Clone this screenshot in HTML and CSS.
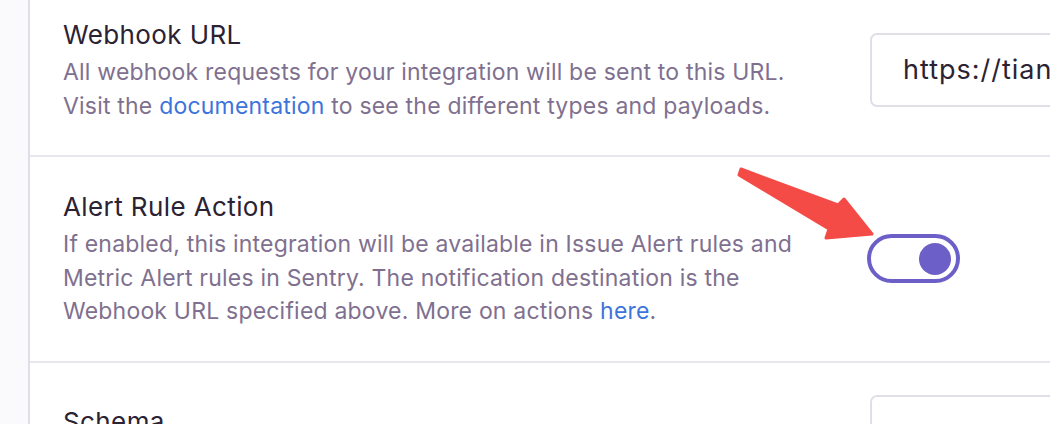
FILE: index.html
```html
<!DOCTYPE html>
<html>
<head>
<meta charset="utf-8">
<link rel="stylesheet" href="styles.css">
</head>
<body>
<div class="page">
  <aside class="sidebar"></aside>
  <main class="panel">
    <div class="row row-first">
      <div class="label">
        <div class="title">Webhook URL</div>
        <div class="help">All webhook requests for your integration will be sent to this URL.<br>Visit the <a href="#">documentation</a> to see the different types and payloads.</div>
      </div>
      <div class="control">
        <div class="input">https://tianshu.example.com/api/sentry/webhook</div>
      </div>
    </div>
    <div class="row">
      <div class="label">
        <div class="title">Alert Rule Action</div>
        <div class="help">If enabled, this integration will be available in Issue Alert rules and Metric Alert rules in Sentry. The notification destination is the Webhook URL specified above. More on actions <a href="#">here</a>.</div>
      </div>
      <div class="control">
        <div class="toggle"><span class="knob"></span></div>
      </div>
    </div>
    <div class="row row-top">
      <div class="label label-schema">
        <div class="title">Schema</div>
        <div class="help">Schema for your UI components. Click here for documentation.</div>
      </div>
      <div class="control">
        <div class="input input-tall"></div>
      </div>
    </div>
  </main>
  <svg class="arrow" width="1050" height="424" viewBox="0 0 1050 424">
    <polygon points="741,169 838,205 844,199 872,234 826,238 829,229 739,175" fill="#f44b47" stroke="#f44b47" stroke-width="3" stroke-linejoin="round"/>
  </svg>
</div>
</body>
</html>
```

FILE: styles.css
```css
html, body {
  margin: 0;
  padding: 0;
  background: #ffffff;
  overflow: hidden;
}

.page {
  position: relative;
  display: flex;
  width: 1050px;
  height: 424px;
  overflow: hidden;
  font-family: Inter, "Noto Sans", sans-serif;
}

.sidebar {
  flex: 0 0 28px;
  background: #faf9fb;
  border-right: 2px solid #e2dee7;
}

.panel {
  flex: 0 0 1300px;
  margin-top: -15px;
}

.row {
  display: flex;
  align-items: center;
  padding: 32px 0 32px 33px;
  border-bottom: 2px solid #e9e6ee;
}

.row-top {
  align-items: flex-start;
  border-bottom: none;
}

.label {
  flex: 0 0 745px;
}

.label-schema {
  padding-top: 9px;
}

.title {
  font-size: 26px;
  line-height: 36px;
  letter-spacing: 0.4px;
  color: #2b2233;
  margin-bottom: 3px;
}

.help {
  font-size: 23px;
  line-height: 33.5px;
  letter-spacing: 0.2px;
  color: #80708f;
}

.help a {
  color: #3d74db;
  text-decoration: none;
}

.control {
  margin-left: 62px;
  flex: 1;
}

.input {
  width: 420px;
  height: 70px;
  border: 2px solid #e2dee7;
  border-radius: 7px;
  box-sizing: content-box;
  padding: 0 31px;
  font-size: 27px;
  line-height: 70px;
  letter-spacing: 1px;
  color: #2b2233;
  white-space: nowrap;
  overflow: hidden;
}

.input-tall {
  height: 200px;
}

.toggle {
  width: 85px;
  height: 41px;
  margin-left: -3px;
  border: 4px solid #6c5fc7;
  border-radius: 30px;
  display: flex;
  align-items: center;
  justify-content: flex-end;
  padding-right: 5px;
  box-sizing: border-box;
  width: 93px;
  height: 49px;
}

.knob {
  width: 32px;
  height: 32px;
  border-radius: 50%;
  background: #6c5fc7;
}

.arrow {
  position: absolute;
  left: 0;
  top: 0;
  pointer-events: none;
}
```
